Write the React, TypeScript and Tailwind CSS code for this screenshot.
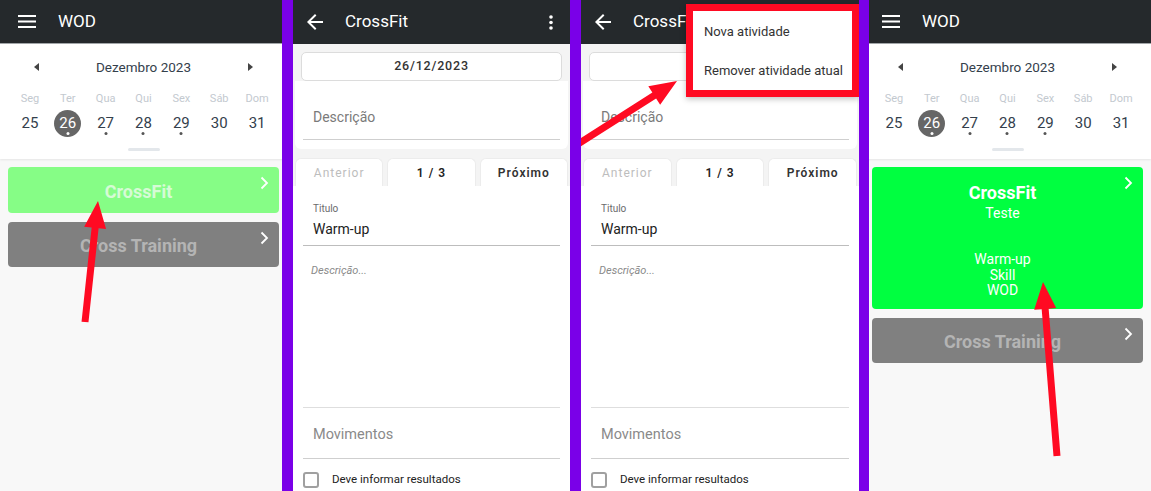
import React from "react";

const days = [
  { label: "Seg", n: 25, dot: false },
  { label: "Ter", n: 26, dot: true, active: true },
  { label: "Qua", n: 27, dot: true },
  { label: "Qui", n: 28, dot: true },
  { label: "Sex", n: 29, dot: true },
  { label: "Sáb", n: 30, dot: false },
  { label: "Dom", n: 31, dot: false },
];

type Pt = [number, number];

function RedArrow({ tail, tip }: { tail: Pt; tip: Pt }) {
  const dx = tip[0] - tail[0];
  const dy = tip[1] - tail[1];
  const len = Math.hypot(dx, dy);
  const ux = dx / len;
  const uy = dy / len;
  const nx = -uy;
  const ny = ux;
  const w = 3.5;
  const W = 11;
  const L = 27;
  const bx = tip[0] - ux * L;
  const by = tip[1] - uy * L;
  const pts: Pt[] = [
    [tail[0] + nx * w, tail[1] + ny * w],
    [bx + nx * w, by + ny * w],
    [bx + nx * W, by + ny * W],
    tip,
    [bx - nx * W, by - ny * W],
    [bx - nx * w, by - ny * w],
    [tail[0] - nx * w, tail[1] - ny * w],
  ];
  return (
    <polygon
      points={pts.map((p) => p.join(",")).join(" ")}
      fill="#ff0a22"
    />
  );
}

function Overlay({ children }: { children: React.ReactNode }) {
  return (
    <svg className="pointer-events-none absolute inset-0 h-full w-full">
      {children}
    </svg>
  );
}

function Chevron() {
  return (
    <svg width="10" height="14" viewBox="0 0 10 14" className="absolute right-[10px] top-[9px]">
      <path d="M2.5 1.5 8 7l-5.5 5.5" fill="none" stroke="white" strokeWidth="1.8" />
    </svg>
  );
}

function WodScreen({ expanded }: { expanded: boolean }) {
  return (
    <div className="flex h-full w-[287px] shrink-0 flex-col bg-[#f8f8f8] font-['Roboto',sans-serif]">
      <header className="flex h-[44px] shrink-0 items-center border-b border-[#a3a7aa] bg-[#25292c] pl-[18px]">
        <svg width="18" height="13" viewBox="0 0 18 13">
          <rect y="0" width="18" height="2" fill="white" />
          <rect y="5.5" width="18" height="2" fill="white" />
          <rect y="11" width="18" height="2" fill="white" />
        </svg>
        <span className="ml-[22px] text-[17px] leading-none text-white">WOD</span>
      </header>

      <div className="bg-white shadow-[0_1px_2px_rgba(0,0,0,0.08)]">
        <div className="flex h-[46px] items-center justify-between px-[34px]">
          <svg width="6" height="8" viewBox="0 0 6 8">
            <path d="M5 0v8L0 4z" fill="#444" />
          </svg>
          <span className="text-[13.5px] text-[#34404c]">Dezembro 2023</span>
          <svg width="6" height="8" viewBox="0 0 6 8">
            <path d="M1 0v8l5-4z" fill="#444" />
          </svg>
        </div>
        <div className="grid grid-cols-7 px-[11px]">
          {days.map((d) => (
            <div key={d.label} className="flex h-[18px] items-center justify-center text-[11px] text-[#c3c9cf]">
              {d.label}
            </div>
          ))}
          {days.map((d) => (
            <div key={d.n} className="flex justify-center pt-[2px]">
              <div
                className={
                  d.active
                    ? "relative flex h-[27px] w-[27px] items-center justify-center rounded-full bg-[#666666] text-[15px] text-white"
                    : "relative flex h-[27px] w-[27px] items-center justify-center text-[15px] text-[#34404c]"
                }
              >
                {d.n}
                {d.dot && (
                  <span
                    className={
                      d.active
                        ? "absolute bottom-[2px] left-1/2 h-[3px] w-[3px] -translate-x-1/2 rounded-full bg-white"
                        : "absolute bottom-[2px] left-1/2 h-[3px] w-[3px] -translate-x-1/2 rounded-full bg-[#555]"
                    }
                  />
                )}
              </div>
            </div>
          ))}
        </div>
        <div className="flex justify-center pb-[8px] pt-[11px]">
          <div className="h-[3px] w-[32px] rounded-full bg-[#e3e7eb]" />
        </div>
      </div>

      <div className="flex flex-col gap-[9px] px-[8px] pt-[8px]">
        {expanded ? (
          <div className="relative flex flex-col items-center rounded-[4px] bg-[#00ff40] pb-[10px] pr-[10px] pt-[15px] text-white">
            <span className="text-[18px] font-bold leading-[22px]">CrossFit</span>
            <span className="text-[14px] leading-[18px]">Teste</span>
            <div className="mt-[30px] flex flex-col items-center text-[14px] leading-[15.5px]">
              <span>Warm-up</span>
              <span>Skill</span>
              <span>WOD</span>
            </div>
            <Chevron />
          </div>
        ) : (
          <div className="relative flex h-[46px] items-start justify-center rounded-[4px] bg-[#86fd86] pr-[10px] pt-[14px]">
            <span className="text-[18px] font-bold leading-[22px] text-[#d6fbd6]">CrossFit</span>
            <Chevron />
          </div>
        )}
        <div className="relative flex h-[45px] items-start justify-center rounded-[4px] bg-[#808080] pr-[10px] pt-[13px]">
          <span className="text-[18px] font-bold leading-[22px] text-[#b4b4b4]">Cross Training</span>
          <Chevron />
        </div>
      </div>
    </div>
  );
}

function EditScreen({ menu }: { menu: boolean }) {
  return (
    <div className="relative flex h-full w-full flex-col bg-[#f4f4f4] font-['Roboto',sans-serif]">
      <header className="flex h-[44px] shrink-0 items-center bg-[#25292c] pl-[10px] pr-[17px] text-white">
        <svg width="24" height="24" viewBox="0 0 24 24">
          <path d="M20 11H7.83l5.59-5.59L12 4l-8 8 8 8 1.41-1.41L7.83 13H20v-2z" fill="white" />
        </svg>
        <span className="ml-[18px] text-[17px]">CrossFit</span>
        <svg width="4" height="15" viewBox="0 0 4 15" className="ml-auto">
          <circle cx="2" cy="2" r="1.8" fill="white" />
          <circle cx="2" cy="7.5" r="1.8" fill="white" />
          <circle cx="2" cy="13" r="1.8" fill="white" />
        </svg>
      </header>

      <div className="px-[8px] pt-[8px]">
        <div className="flex h-[29px] items-center justify-center rounded-[5px] border border-[#dcdcdc] bg-white text-[12.5px] font-medium tracking-[0.8px] text-[#333]">
          {menu ? "" : "26/12/2023"}
        </div>
      </div>

      <div className="mx-[2px] rounded-b-[6px] bg-white px-[8px] pb-[9px] pt-[26px]">
        <div className="border-b border-[#cfcfcf] pb-[12px] pl-[10px] text-[14px] leading-[20px] text-[#7a7a7a]">
          Descrição
        </div>
      </div>

      <div className="mx-[2px] mt-[9px] flex gap-[4px]">
        <div className="flex h-[28px] flex-1 items-center justify-center rounded-t-[6px] border border-b-0 border-[#ececec] bg-white text-[12px] tracking-[1px] text-[#bdbdbd]">
          Anterior
        </div>
        <div className="flex h-[28px] flex-1 items-center justify-center rounded-t-[6px] border border-b-0 border-[#ececec] bg-white text-[12px] font-semibold tracking-[1px] text-[#222]">
          1 / 3
        </div>
        <div className="flex h-[28px] flex-1 items-center justify-center rounded-t-[6px] border border-b-0 border-[#ececec] bg-white text-[12px] font-semibold tracking-[1px] text-[#333]">
          Próximo
        </div>
      </div>

      <div className="flex flex-1 flex-col bg-white px-[10px] pt-[17px]">
        <div className="border-b border-[#bdbdbd] pb-[6px] pl-[10px]">
          <div className="text-[10px] leading-[12px] text-[#6b6b6b]">Titulo</div>
          <div className="mt-[4px] text-[14px] leading-[20px] text-[#222]">Warm-up</div>
        </div>
        <div className="h-[162px] border-b border-[#dedede] pl-[8px] pt-[18px] text-[11px] italic leading-[14px] text-[#8a8a8a]">
          Descrição...
        </div>
        <div className="border-b border-[#cfcfcf] pb-[13px] pl-[10px] pt-[17px] text-[14.5px] leading-[20px] text-[#8a8a8a]">
          Movimentos
        </div>
        <div className="mt-[12px] flex items-center">
          <div className="h-[16px] w-[16px] rounded-[3px] border-2 border-[#a0a0a0]" />
          <span className="ml-[13px] text-[11.5px] text-[#222]">Deve informar resultados</span>
        </div>
      </div>

      {menu && (
        <div className="absolute right-0 top-[4px] flex h-[93px] w-[173px] flex-col border-[7px] border-[#ff0a22] bg-white pt-[1px] shadow-[0_2px_6px_rgba(0,0,0,0.25)]">
          <div className="flex h-[39px] items-center pl-[11px] text-[13px] text-[#333]">Nova atividade</div>
          <div className="flex h-[39px] items-center pl-[11px] text-[13px] text-[#333]">Remover atividade atual</div>
        </div>
      )}
    </div>
  );
}

export default function App() {
  return (
    <div className="flex h-[491px] w-[1151px] overflow-hidden bg-[#7a00e8]">
      <div className="relative flex w-[282px] shrink-0 overflow-hidden">
        <WodScreen expanded={false} />
        <Overlay>
          <RedArrow tail={[85, 322]} tip={[98, 201]} />
        </Overlay>
      </div>
      <div className="w-[11px] shrink-0" />
      <div className="relative w-[277px] shrink-0 overflow-hidden">
        <EditScreen menu={false} />
      </div>
      <div className="w-[11px] shrink-0" />
      <div className="relative w-[278px] shrink-0 overflow-hidden">
        <EditScreen menu />
        <Overlay>
          <RedArrow tail={[-6, 146]} tip={[96, 81]} />
        </Overlay>
      </div>
      <div className="w-[10px] shrink-0" />
      <div className="relative flex w-[282px] shrink-0 justify-end overflow-hidden">
        <WodScreen expanded />
        <Overlay>
          <RedArrow tail={[188, 456]} tip={[174, 282]} />
        </Overlay>
      </div>
    </div>
  );
}
